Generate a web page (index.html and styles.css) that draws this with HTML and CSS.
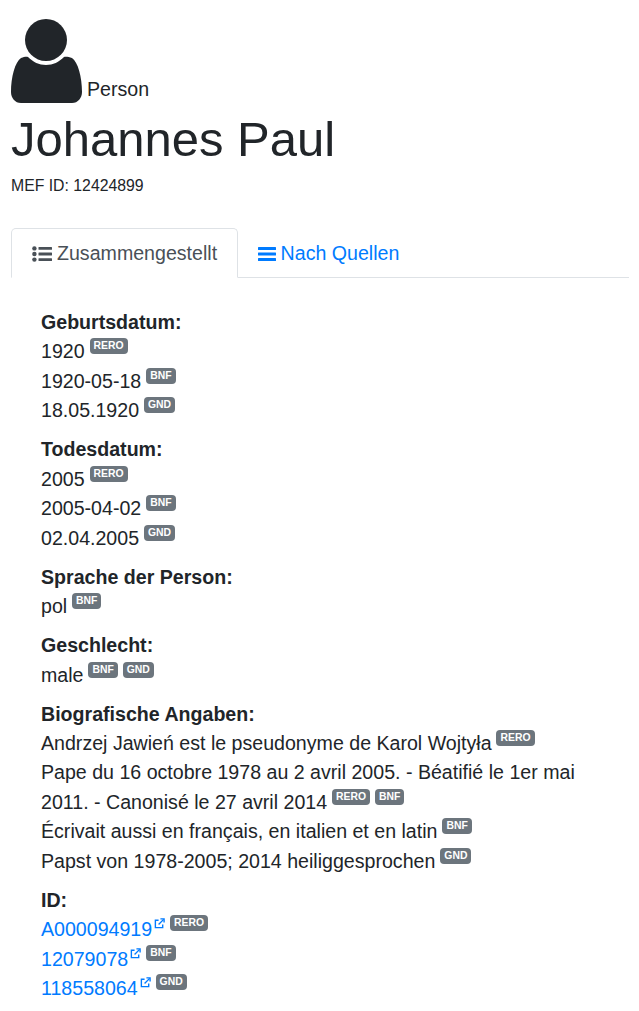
FILE: index.html
```html
<!DOCTYPE html>
<html lang="de">
<head>
<meta charset="utf-8">
<title>Johannes Paul</title>
<link rel="stylesheet" href="styles.css">
</head>
<body>
<header class="head">
  <div class="kind">
    <svg class="person-icon" viewBox="0 0 71 84" aria-hidden="true"><circle cx="35" cy="21" r="21"/><path d="M17 38C22 43 28 46 35 46C42 46 48 43 53 38C55 37.500 58 38 61 39C67 43 71 58 71 73C71 79 67 84 61 84H10C4 84 0 79 0 73C0 58 4 43 10 39C13 38 15 37.500 17 38Z"/></svg>
    <span class="kind-label">Person</span>
  </div>
  <h1 class="title">Johannes Paul</h1>
  <div class="mef">MEF ID: 12424899</div>
</header>
<nav class="tabs">
  <a class="tab active" href="#">
    <svg class="tab-icon" viewBox="0 0 20 16" aria-hidden="true"><circle cx="2.400" cy="2.400" r="2.200"/><circle cx="2.400" cy="8" r="2.200"/><circle cx="2.400" cy="13.600" r="2.200"/><rect x="6.500" y="1" width="13.500" height="2.800" rx=".5"/><rect x="6.500" y="6.600" width="13.500" height="2.800" rx=".5"/><rect x="6.500" y="12.200" width="13.500" height="2.800" rx=".5"/></svg>
    Zusammengestellt
  </a>
  <a class="tab" href="#">
    <svg class="tab-icon bars" viewBox="0 0 18 16" aria-hidden="true"><rect y="1" width="18" height="3" rx=".5"/><rect y="6.500" width="18" height="3" rx=".5"/><rect y="12" width="18" height="3" rx=".5"/></svg>
    Nach Quellen
  </a>
</nav>
<main class="content">
  <section class="group">
    <h2 class="label">Geburtsdatum:</h2>
    <div class="row">1920 <sup class="badge">RERO</sup></div>
    <div class="row">1920-05-18 <sup class="badge">BNF</sup></div>
    <div class="row">18.05.1920 <sup class="badge">GND</sup></div>
  </section>
  <section class="group">
    <h2 class="label">Todesdatum:</h2>
    <div class="row">2005 <sup class="badge">RERO</sup></div>
    <div class="row">2005-04-02 <sup class="badge">BNF</sup></div>
    <div class="row">02.04.2005 <sup class="badge">GND</sup></div>
  </section>
  <section class="group">
    <h2 class="label">Sprache der Person:</h2>
    <div class="row">pol <sup class="badge">BNF</sup></div>
  </section>
  <section class="group">
    <h2 class="label">Geschlecht:</h2>
    <div class="row">male <sup class="badge">BNF</sup> <sup class="badge">GND</sup></div>
  </section>
  <section class="group">
    <h2 class="label">Biografische Angaben:</h2>
    <div class="row">Andrzej Jawień est le pseudonyme de Karol Wojtyła <sup class="badge">RERO</sup></div>
    <div class="row">Pape du 16 octobre 1978 au 2 avril 2005. - Béatifié le 1er mai 2011. - Canonisé le 27 avril 2014 <sup class="badge">RERO</sup> <sup class="badge">BNF</sup></div>
    <div class="row">Écrivait aussi en français, en italien et en latin <sup class="badge">BNF</sup></div>
    <div class="row">Papst von 1978-2005; 2014 heiliggesprochen <sup class="badge">GND</sup></div>
  </section>
  <section class="group">
    <h2 class="label">ID:</h2>
    <div class="row"><a class="ext" href="#">A000094919<svg class="ext-icon" viewBox="0 0 12 12" aria-hidden="true"><path d="M9.500 7V10.500H1.500V2.500H5"/><path d="M5 7L10.500 1.500"/><path d="M7 1H11V5"/></svg></a> <sup class="badge">RERO</sup></div>
    <div class="row"><a class="ext" href="#">12079078<svg class="ext-icon" viewBox="0 0 12 12" aria-hidden="true"><path d="M9.500 7V10.500H1.500V2.500H5"/><path d="M5 7L10.500 1.500"/><path d="M7 1H11V5"/></svg></a> <sup class="badge">BNF</sup></div>
    <div class="row"><a class="ext" href="#">118558064<svg class="ext-icon" viewBox="0 0 12 12" aria-hidden="true"><path d="M9.500 7V10.500H1.500V2.500H5"/><path d="M5 7L10.500 1.500"/><path d="M7 1H11V5"/></svg></a> <sup class="badge">GND</sup></div>
  </section>
</main>
</body>
</html>
```
FILE: styles.css
```css
* { box-sizing: border-box; }
html, body { margin: 0; padding: 0; }
body {
  padding: 19px 10px 0 11px;
  font-family: "Liberation Sans", Arial, sans-serif;
  font-size: 19.6px;
  line-height: 1.5;
  color: #212529;
  background: #fff;
}
.kind { display: flex; align-items: flex-end; height: 84px; }
.person-icon { width: 71px; height: 84px; fill: #212529; flex: none; }
.kind-label { margin-left: 5px; line-height: 28px; }
.title { margin: 0; font-size: 49px; font-weight: 400; line-height: 59px; padding-top: 7px; }
.mef { font-size: 15.8px; line-height: 24px; margin-top: 5px; }
.tabs { display: flex; margin-top: 30px; border-bottom: 1px solid #dee2e6; height: 50px; }
.tab {
  display: flex; align-items: center; gap: 5px;
  height: 50px; padding: 1px 20px 0;
  border: 1px solid transparent;
  border-radius: 5px 5px 0 0;
  color: #007bff; text-decoration: none;
  white-space: nowrap;
}
.tab + .tab { margin-left: -1px; gap: 4.5px; }
.tab.active { color: #495057; background: #fff; border-color: #dee2e6 #dee2e6 #fff; }
.tab-icon { width: 20px; height: 16px; fill: currentColor; flex: none; }
.tab-icon.bars { width: 18px; }
.content { padding: 30px 30px 0 30px; }
.group { margin-bottom: 9.7px; }
.label { margin: 0; font-size: 19.6px; font-weight: 700; line-height: 29.4px; }
.row { line-height: 29.4px; }
.badge {
  display: inline-block;
  padding: 3px 4px;
  margin-left: -.5px;
  font-size: 10.4px; font-weight: 700; line-height: 10px;
  color: #fff; background: #6c757d;
  border-radius: 4px;
  vertical-align: 9px;
}
.ext + .badge { vertical-align: 10px; }
.ext { color: #007bff; text-decoration: none; }
.ext-icon { width: 11px; height: 11px; fill: none; stroke: currentColor; stroke-width: 1.500; vertical-align: 7px; margin-left: 2px; }
```
